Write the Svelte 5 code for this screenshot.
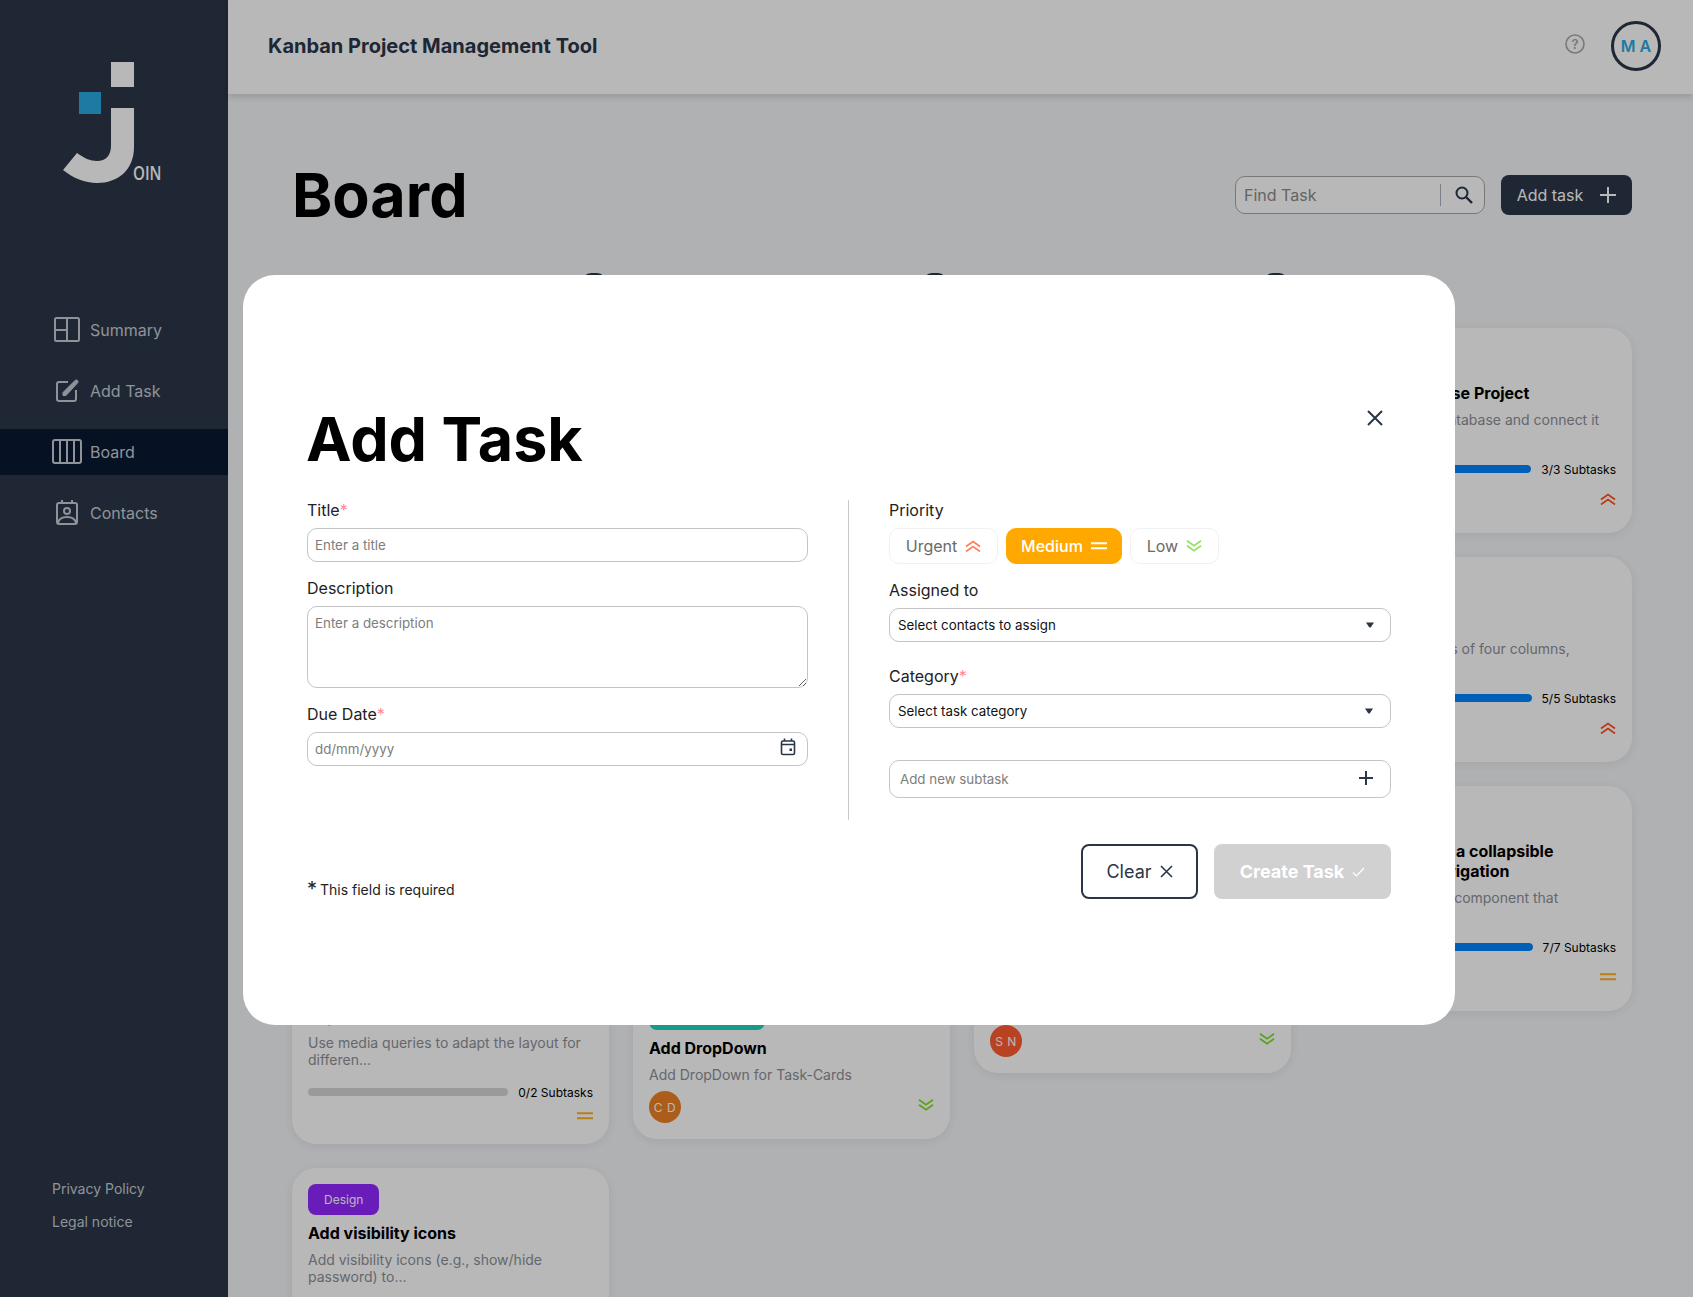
<script>
  const nav = [
    { label: 'Summary', icon: 'summary' },
    { label: 'Add Task', icon: 'add' },
    { label: 'Board', icon: 'board', active: true },
    { label: 'Contacts', icon: 'contacts' }
  ];

  const purple = '#9327ff';
  const teal = '#1fd7c1';
  const blue = '#0038ff';

  // most of these sit behind the dialog, only the edges show
  const columns = [
    {
      title: 'To do',
      add: true,
      cards: [
        { tag: 'User Story', color: blue, title: 'Create login page', desc: 'Build the login form and validate all of its input fields...', done: 0, total: 3, prio: 'medium', people: [['A B', '#ff7a00']] },
        { tag: 'Design', color: purple, title: 'Style the header', desc: 'Align the header with the design file and add its menu...', prio: 'low', people: [['M A', '#29abe2']] },
        { tag: 'Design', color: purple, title: 'Style the sidebar', desc: 'Align the sidebar with the design file and add its links...', prio: 'low', people: [['S N', '#ff5c2f']] },
        { tag: 'User Story', color: blue, title: 'Implement the layout', desc: 'Use media queries to adapt the layout for differen...', done: 0, total: 2, prio: 'medium' },
        { tag: 'Design', color: purple, title: 'Add visibility icons', desc: 'Add visibility icons (e.g., show/hide password) to...', done: 0, total: 2, prio: 'low' }
      ]
    },
    {
      title: 'In progress',
      add: true,
      cards: [
        { tag: 'User Story', color: blue, title: 'Contact list', desc: 'Show all contacts sorted by their name with a letter index...', done: 1, total: 4, prio: 'urgent', people: [['C D', '#f08125']] },
        { tag: 'User Story', color: blue, title: 'Task details', desc: 'Open a dialog with all the details of the selected task...', done: 2, total: 4, prio: 'medium', people: [['M A', '#29abe2']] },
        { tag: 'Design', color: purple, title: 'Summary page', desc: 'Add counters for every board column on the summary page...', prio: 'medium', people: [['S N', '#ff5c2f']] },
        { tag: 'Technical Task', color: teal, title: 'Add DropDown', desc: 'Add DropDown for Task-Cards', prio: 'low', people: [['C D', '#f08125']] }
      ]
    },
    {
      title: 'Await feedback',
      add: true,
      cards: [
        { tag: 'Design', color: purple, title: 'Color palette', desc: 'Pick the palette for the app.', prio: 'low', people: [['A B', '#ff7a00']] },
        { tag: 'Design', color: purple, title: 'Board icons', desc: 'Draw the icons for all the priority levels and the columns...', prio: 'low', people: [['C D', '#f08125']] },
        { tag: 'User Story', color: blue, title: 'Search tasks', desc: 'Filter the cards while typing.', prio: 'medium', people: [['M A', '#29abe2']], short: true },
        { tag: 'Design', color: purple, title: 'Footer links', desc: 'Link privacy policy and legal notice pages from the sidebar...', prio: 'low', people: [['S N', '#ff5c2f']] }
      ]
    },
    {
      title: 'Done',
      cards: [
        { tag: 'Technical Task', color: teal, title: 'Prepare Database Project', desc: 'Create Firebase database and connect it application...', done: 3, total: 3, prio: 'urgent', people: [['M A', '#29abe2']] },
        { tag: 'User Story', color: blue, title: 'Kanban board', desc: 'The board consists of four columns, organized...', done: 5, total: 5, prio: 'urgent', people: [['C D', '#f08125']] },
        { tag: 'User Story', color: blue, title: 'Add dialog with a collapsible mobile-first navigation', desc: 'Develop a sidebar component that collapses...', done: 7, total: 7, prio: 'medium', people: [['S N', '#ff5c2f']] }
      ]
    }
  ];
</script>

{#snippet prio(kind, tone)}
  <svg class="prio {tone}" class:urgent={kind === 'urgent'} class:medium={kind === 'medium'} class:low={kind === 'low'} width="16" height="12" viewBox="0 0 16 12" fill="none" stroke="currentColor" stroke-width="1.7">
    {#if kind === 'urgent'}
      <path d="M1 6.500 8 1.500 15 6.500M1 11.500 8 6.500 15 11.500" />
    {:else if kind === 'medium'}
      <path d="M0 3.200H16M0 8.200H16" stroke-width="2" />
    {:else}
      <path d="M1 .8 8 5.800 15 .8M1 5.800 8 10.800 15 5.800" />
    {/if}
  </svg>
{/snippet}

<div class="page">
  <aside class="sidebar">
    <svg class="logo" width="228" height="200" viewBox="0 0 228 200">
      <rect x="111" y="62" width="23" height="25" fill="#fff" />
      <rect x="79" y="92" width="22" height="22" fill="#29abe2" />
      <path fill="#fff" d="M111 108H134V147C134 170 118 183 97 183 85 183 73 178 63 170L77 153C84 158 90 161 97 161 106 161 111 155 111 146Z" />
    </svg>
    <span class="logo-text">OIN</span>

    <nav class="nav">
      {#each nav as item}
        <a class="nav-item" class:active={item.active} href="#top">
          <span class="nav-icon">
            <svg width="32" height="28" viewBox="0 0 32 28" fill="none" stroke="currentColor" stroke-width="2" stroke-linejoin="round">
              {#if item.icon === 'summary'}
                <rect x="4" y="2" width="24" height="23" rx="1.500" />
                <path d="M16 2V25M4 14H16" />
              {:else if item.icon === 'add'}
                <path d="M17 5H8a2 2 0 0 0-2 2V22a2 2 0 0 0 2 2H23a2 2 0 0 0 2-2V13" />
                <path d="M12 18.500V15.500L24 3.500a1.500 1.500 0 0 1 2.500 2.500L15 18.500Z" fill="currentColor" stroke-width="1" />
              {:else if item.icon === 'board'}
                <rect x="2" y="2" width="28" height="23" rx="2" />
                <path d="M9 2V25M16 2V25M23 2V25" />
              {:else}
                <rect x="6" y="4" width="20" height="21" rx="2" />
                <path d="M11 1V5M21 1V5" />
                <circle cx="16" cy="12" r="3" />
                <path d="M7 24C8 19 12 18 16 18S24 19 25 24" />
              {/if}
            </svg>
          </span>
          {item.label}
        </a>
      {/each}
    </nav>

    <div class="legal">
      <a href="#top">Privacy Policy</a>
      <a href="#top">Legal notice</a>
    </div>
  </aside>

  <div class="content">
    <header class="topbar">
      <span class="app-title">Kanban Project Management Tool</span>
      <div class="top-right">
        <svg width="22" height="22" viewBox="0 0 22 22" fill="none" class="help">
          <circle cx="11" cy="11" r="9" stroke="currentColor" stroke-width="1.600" />
          <text x="11" y="15.500" text-anchor="middle" font-size="13" font-weight="600" fill="currentColor">?</text>
        </svg>
        <div class="me">M A</div>
      </div>
    </header>

    <main class="main">
      <div class="board-head">
        <h1>Board</h1>
        <div class="board-tools">
          <div class="search">
            <input type="text" placeholder="Find Task" />
            <span class="search-sep"></span>
            <svg width="22" height="22" viewBox="0 0 22 22" fill="none" stroke="#2a3647" stroke-width="2">
              <circle cx="9" cy="9" r="5.500" />
              <path d="M13 13 19 19" stroke-width="2.400" />
            </svg>
          </div>
          <button class="add-btn">
            Add task
            <svg width="16" height="16" viewBox="0 0 16 16" stroke="currentColor" stroke-width="2"><path d="M8 0V16M0 8H16" /></svg>
          </button>
        </div>
      </div>

      <div class="columns">
        {#each columns as col}
          <section class="column">
            <div class="col-head">
              <span>{col.title}</span>
              {#if col.add}
                <svg width="24" height="24" viewBox="0 0 24 24" fill="none" stroke="#2a3647" stroke-width="2">
                  <rect x="1" y="1" width="22" height="22" rx="8" />
                  <path d="M12 7V17M7 12H17" />
                </svg>
              {/if}
            </div>
            {#each col.cards as card}
              <article class="card" class:short={card.short}>
                <span class="tag" style="background: {card.color}">{card.tag}</span>
                <h3>{card.title}</h3>
                <p>{card.desc}</p>
                {#if card.total}
                  <div class="progress">
                    <div class="track"><div class="fill" style="width: {(card.done / card.total) * 100}%"></div></div>
                    <span>{card.done}/{card.total} Subtasks</span>
                  </div>
                {/if}
                <div class="card-foot" class:solo={!card.people}>
                  <div class="people">
                    {#each card.people ?? [] as p}
                      <span class="person" style="background: {p[1]}">{p[0]}</span>
                    {/each}
                  </div>
                  {@render prio(card.prio, 'strong')}
                </div>
              </article>
            {/each}
          </section>
        {/each}
      </div>
    </main>
  </div>
</div>

<div class="backdrop"></div>

<div class="dialog">
  <button class="close" aria-label="Close">
    <svg width="18" height="18" viewBox="0 0 18 18" stroke="#2a3647" stroke-width="2"><path d="M2 2 16 16M16 2 2 16" /></svg>
  </button>
  <h2>Add Task</h2>

  <div class="form">
    <div class="form-col">
      <label for="t-title">Title<em>*</em></label>
      <input id="t-title" type="text" placeholder="Enter a title" />

      <label for="t-desc" class="next">Description</label>
      <textarea id="t-desc" placeholder="Enter a description"></textarea>

      <label for="t-date" class="next">Due Date<em>*</em></label>
      <div class="with-icon">
        <input id="t-date" type="text" placeholder="dd/mm/yyyy" />
        <svg class="cal" width="16" height="18" viewBox="0 0 16 18" fill="none" stroke="#2a3647" stroke-width="1.600">
          <rect x="1.500" y="3" width="13" height="13.500" rx="1.500" />
          <path d="M1.500 6.500H14.500M4.500 .5V3M11.500 .5V3" />
          <rect x="9.500" y="10.500" width="2.500" height="2.500" fill="#2a3647" stroke="none" />
        </svg>
      </div>
    </div>

    <div class="form-sep"></div>

    <div class="form-col">
      <div class="label">Priority</div>
      <div class="prio-row">
        <button class="prio-btn urgent-btn">Urgent {@render prio('urgent', 'soft')}</button>
        <button class="prio-btn medium-btn on">Medium {@render prio('medium', 'white')}</button>
        <button class="prio-btn low-btn">Low {@render prio('low', 'soft')}</button>
      </div>

      <div class="label next">Assigned to</div>
      <div class="select">
        Select contacts to assign
        <svg width="8" height="6" viewBox="0 0 8 6" fill="#2a3647"><path d="M0 .5H8L5 5Q4 6 3 5Z" /></svg>
      </div>

      <div class="label cat">Category<em>*</em></div>
      <div class="select second">
        Select task category
        <svg width="8" height="6" viewBox="0 0 8 6" fill="#2a3647"><path d="M0 .5H8L5 5Q4 6 3 5Z" /></svg>
      </div>

      <div class="subtask">
        <input type="text" placeholder="Add new subtask" />
        <svg width="14" height="14" viewBox="0 0 14 14" stroke="#2a3647" stroke-width="2"><path d="M7 0V14M0 7H14" /></svg>
      </div>
    </div>
  </div>

  <div class="dialog-foot">
    <div class="required"><span>*</span> This field is required</div>
    <div class="actions">
      <button class="clear">
        Clear
        <svg width="13" height="13" viewBox="0 0 13 13" stroke="currentColor" stroke-width="1.600"><path d="M1 1 12 12M12 1 1 12" /></svg>
      </button>
      <button class="create" disabled>
        Create Task
        <svg width="13" height="10" viewBox="0 0 13 10" fill="none" stroke="currentColor" stroke-width="1.200"><path d="M1 5.500 4.500 9 12 1" /></svg>
      </button>
    </div>
  </div>
</div>

<style>
  :global(body) {
    margin: 0;
    height: 100vh;
    overflow: hidden;
    font-family: Inter, 'Liberation Sans', sans-serif;
    color: #000;
  }
  * {
    box-sizing: border-box;
  }
  button,
  input,
  textarea {
    font-family: inherit;
  }
  .page {
    display: flex;
    height: 1297px;
    overflow: hidden;
  }

  /* sidebar */
  .sidebar {
    position: relative;
    flex: 0 0 228px;
    display: flex;
    flex-direction: column;
    background: #2a3647;
    color: #c7ccd4;
  }
  .logo {
    display: block;
    flex: none;
  }
  .logo-text {
    position: absolute;
    left: 133px;
    top: 162px;
    font-family: 'Open Sans', sans-serif;
    font-weight: 600;
    font-size: 19px;
    line-height: 22px;
    color: #fff;
    transform: scaleX(0.8);
    transform-origin: left center;
  }
  .nav {
    display: flex;
    flex-direction: column;
    gap: 15px;
    margin-top: 107px;
  }
  .nav-item {
    display: flex;
    align-items: center;
    height: 46px;
    padding-left: 51px;
    gap: 7px;
    color: inherit;
    font-size: 16px;
    text-decoration: none;
  }
  .nav-item.active {
    background: #091931;
  }
  .nav-icon {
    display: flex;
  }
  .legal {
    margin-top: auto;
    padding: 0 0 67px 52px;
    display: flex;
    flex-direction: column;
    gap: 16px;
    font-size: 14px;
  }
  .legal a {
    color: inherit;
    text-decoration: none;
    line-height: 17px;
  }

  /* header */
  .content {
    flex: 1;
    min-width: 0;
    background: #f4f6f9;
  }
  .topbar {
    position: relative;
    height: 94px;
    padding: 0 32px 2px 40px;
    display: flex;
    align-items: center;
    justify-content: space-between;
    background: #fff;
    box-shadow: 0 4px 6px rgba(0, 0, 0, 0.12);
  }
  .app-title {
    font-size: 20px;
    font-weight: 700;
    color: #2a3647;
  }
  .top-right {
    display: flex;
    align-items: center;
    gap: 25px;
  }
  .help {
    color: #a8a8a8;
    margin-top: -4px;
  }
  .me {
    width: 50px;
    height: 50px;
    border: 3px solid #2a3647;
    border-radius: 50%;
    display: flex;
    align-items: center;
    justify-content: center;
    font-size: 16px;
    font-weight: 600;
    color: #29abe2;
  }

  /* board */
  .main {
    padding: 0 61px 0 64px;
  }
  .board-head {
    height: 179px;
    display: flex;
    justify-content: space-between;
    align-items: flex-start;
    padding-top: 64px;
  }
  h1,
  h2 {
    margin: 0;
    font-size: 61px;
    line-height: 74px;
    font-weight: 700;
  }
  h2 {
    margin-left: -1px;
  }
  .board-tools {
    display: flex;
    align-items: center;
    gap: 16px;
    margin-top: 17px;
  }
  .search {
    width: 250px;
    height: 38px;
    display: flex;
    align-items: center;
    padding: 0 9px 0 8px;
    background: #fff;
    border: 1px solid #a8a8a8;
    border-radius: 10px;
  }
  .search input {
    flex: 1;
    min-width: 0;
    border: 0;
    outline: 0;
    padding: 0;
    background: none;
    font-size: 16px;
  }
  .search input::placeholder {
    color: #8b8b8b;
  }
  .search-sep {
    width: 1px;
    height: 22px;
    margin: 0 12px 0 6px;
    background: #a8b2c0;
  }
  .add-btn {
    width: 131px;
    height: 40px;
    display: flex;
    align-items: center;
    justify-content: center;
    gap: 17px;
    background: #2a3647;
    color: #fff;
    border: 0;
    border-radius: 8px;
    font-size: 16px;
  }
  .columns {
    display: grid;
    grid-template-columns: repeat(4, 1fr);
    gap: 24px;
  }
  .column {
    display: flex;
    flex-direction: column;
    gap: 24px;
  }
  .col-head {
    height: 31px;
    display: flex;
    align-items: flex-start;
    justify-content: space-between;
    padding-right: 3px;
    font-weight: 700;
    font-size: 20px;
  }
  .card {
    padding: 16px;
    background: #fff;
    border-radius: 24px;
    box-shadow: 0 2px 12px rgba(0, 0, 0, 0.08);
  }
  .card.short {
    min-height: 171px;
  }
  .tag {
    display: inline-flex;
    align-items: center;
    height: 31px;
    padding: 0 16px;
    border-radius: 8px;
    color: #fff;
    font-size: 12px;
    vertical-align: top;
  }
  h3 {
    margin: 8px 0 0;
    font-size: 16px;
    line-height: 20px;
    font-weight: 700;
  }
  .card p {
    margin: 8px 0 0;
    font-size: 14px;
    line-height: 17px;
    color: #8c8f97;
  }
  .progress {
    display: flex;
    align-items: center;
    gap: 10px;
    height: 17px;
    margin-top: 15px;
    font-size: 12px;
    color: #000;
  }
  .progress span {
    padding-top: 2px;
  }
  .track {
    flex: 1;
    height: 8px;
    border-radius: 4px;
    background: #d6d6d6;
    overflow: hidden;
  }
  .fill {
    height: 100%;
    border-radius: 4px;
    background: #0086ff;
  }
  .card-foot {
    display: flex;
    align-items: center;
    justify-content: space-between;
    height: 32px;
    margin-top: 8px;
  }
  .card-foot .prio {
    margin-top: -4px;
  }
  .card-foot.solo {
    height: 24px;
    margin-top: 4px;
  }
  .card-foot.solo .prio {
    margin-top: 0;
  }
  .people {
    display: flex;
  }
  .person {
    width: 32px;
    height: 32px;
    display: flex;
    align-items: center;
    justify-content: center;
    border-radius: 50%;
    color: #fff;
    font-size: 12px;
    letter-spacing: 0.5px;
  }
  .prio {
    flex: none;
  }
  .prio.strong.urgent {
    color: #ff4f1c;
  }
  .prio.strong.medium {
    color: #ffb020;
  }
  .prio.strong.low {
    color: #7ae229;
  }
  .prio.soft.urgent {
    color: #ff7f5c;
  }
  .prio.soft.low {
    color: #92e35e;
  }
  .prio.white {
    color: #fff;
  }

  /* dialog over the board */
  .backdrop {
    position: fixed;
    inset: 0;
    background: rgba(0, 0, 0, 0.28);
  }
  .dialog {
    position: fixed;
    left: 243px;
    top: 275px;
    width: 1212px;
    height: 750px;
    padding: 127px 64px 0;
    background: #fff;
    border-radius: 32px;
  }
  .close {
    position: absolute;
    top: 134px;
    right: 71px;
    padding: 0;
    border: 0;
    background: none;
    display: flex;
  }
  .form {
    display: grid;
    grid-template-columns: 501px 1px 1fr;
    column-gap: 40px;
    height: 320px;
    margin-top: 24px;
  }
  .form-col {
    display: flex;
    flex-direction: column;
    min-width: 0;
  }
  .form-sep {
    background: #c9c9c9;
  }
  label,
  .label {
    font-size: 16px;
    line-height: 20px;
    margin-bottom: 8px;
    color: #222;
  }
  .next {
    margin-top: 16px;
  }
  .cat {
    margin-top: 24px;
  }
  em {
    font-style: normal;
    color: #ff8a95;
    font-size: 16px;
    line-height: 0;
  }
  .form-col input,
  textarea {
    width: 100%;
    height: 34px;
    padding: 0 7px;
    border: 1px solid #c4c4c4;
    border-radius: 10px;
    font-size: 13.33px;
    outline: 0;
    background: #fff;
    display: block;
  }
  textarea {
    height: 82px;
    padding: 8px 7px;
  }
  input::placeholder,
  textarea::placeholder {
    color: #7d7d7d;
    opacity: 1;
  }
  .with-icon {
    position: relative;
  }
  .cal {
    position: absolute;
    right: 12px;
    top: 6px;
  }
  .prio-row {
    display: flex;
    gap: 8px;
  }
  .prio-btn {
    height: 36px;
    display: flex;
    align-items: center;
    justify-content: center;
    gap: 8px;
    background: #fff;
    border: 1px solid #f1f1f1;
    border-radius: 10px;
    color: #6a6a6a;
    font-size: 16px;
    padding: 0;
  }
  .urgent-btn {
    width: 109px;
  }
  .medium-btn {
    width: 116px;
  }
  .low-btn {
    width: 89px;
  }
  .prio-btn.on {
    background: #ffa800;
    border-color: #ffa800;
    color: #fff;
    font-weight: 500;
  }
  .select {
    height: 34px;
    padding: 0 16px 0 8px;
    display: flex;
    align-items: center;
    justify-content: space-between;
    border: 1px solid #c4c4c4;
    border-radius: 10px;
    font-size: 13.33px;
    color: #111;
  }
  .select.second {
    padding-right: 17px;
  }
  .subtask {
    position: relative;
    margin-top: 32px;
  }
  .subtask input {
    height: 38px;
    padding: 0 44px 0 10px;
  }
  .subtask svg {
    position: absolute;
    right: 18px;
    top: 11px;
  }
  .dialog-foot {
    display: flex;
    justify-content: space-between;
    align-items: flex-end;
    margin-top: 24px;
  }
  .required {
    font-size: 14px;
    line-height: 17px;
    padding-bottom: 1px;
    color: #222;
  }
  .required span {
    font-size: 20px;
    line-height: 17px;
    vertical-align: -1px;
    margin-right: -1px;
  }
  .actions {
    display: flex;
    gap: 16px;
  }
  .clear,
  .create {
    height: 55px;
    display: flex;
    align-items: center;
    justify-content: center;
    gap: 8px;
    border-radius: 8px;
    font-size: 18px;
    padding: 0;
  }
  .clear {
    width: 117px;
    background: #fff;
    border: 2px solid #2a3647;
    color: #2a3647;
  }
  .create {
    width: 177px;
    background: #d1d1d1;
    border: 0;
    color: #fff;
    font-weight: 700;
  }
</style>
